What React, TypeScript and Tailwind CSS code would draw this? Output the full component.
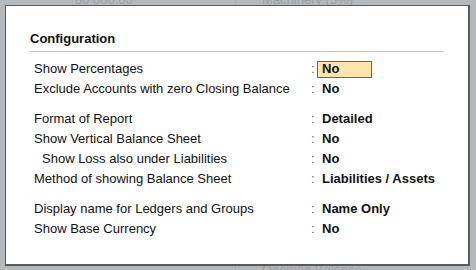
import React from 'react';

type Row = { label: string; value: string; indent?: boolean; active?: boolean };

const groups: Row[][] = [
  [
    { label: 'Show Percentages', value: 'No', active: true },
    { label: 'Exclude Accounts with zero Closing Balance', value: 'No' },
  ],
  [
    { label: 'Format of Report', value: 'Detailed' },
    { label: 'Show Vertical Balance Sheet', value: 'No' },
    { label: 'Show Loss also under Liabilities', value: 'No', indent: true },
    { label: 'Method of showing Balance Sheet', value: 'Liabilities / Assets' },
  ],
  [
    { label: 'Display name for Ledgers and Groups', value: 'Name Only' },
    { label: 'Show Base Currency', value: 'No' },
  ],
];

export default function App() {
  return (
    <div
      className="relative w-[476px] h-[270px] overflow-hidden bg-[#b5b9bc] text-[13px]"
      style={{ fontFamily: '"Liberation Sans", Arial, sans-serif' }}
    >
      {/* report behind the dialog */}
      <div className="flex h-full">
        <div className="w-[236px] border-r border-[#a9adb0] text-[#9ca1a5]">
          <div className="mt-[-8px] pl-[75px] leading-[15px]">80 000.00</div>
        </div>
        <div className="flex flex-1 flex-col justify-between text-[#9ca1a5]">
          <div className="mt-[-8px] pl-[26px] leading-[15px]">Machinery (5%)</div>
          <div className="mb-[-7px] pl-[26px] leading-[15px]">Opening Balance</div>
        </div>
      </div>

      {/* configuration dialog */}
      <div className="absolute left-[5px] top-[5px] w-[465px] h-[261px] bg-white border-l border-t border-r-2 border-b-2 border-[#5a5a5a] pl-[24px] pr-[24px] pt-[23px] text-[#111]">
        <div className="border-b border-[#c9c9c9] pb-[2px] leading-[20px] font-bold">Configuration</div>
        <div className="mt-[7px] flex flex-col gap-[10px] pl-[4px]">
          {groups.map((group, gi) => (
            <div key={gi} className="flex flex-col">
              {group.map(row => (
                <div key={row.label} className="flex h-[20px] items-center">
                  <div className={`w-[277px] shrink-0 ${row.indent ? 'pl-[8px]' : ''}`}>{row.label}</div>
                  <div className="w-[6px] shrink-0 text-[#555]">:</div>
                  <div
                    className={`flex h-[17px] items-center px-[4px] font-bold border ${
                      row.active ? 'w-[55px] bg-[#fee5ae] border-[#1c7ac0]' : 'border-transparent'
                    }`}
                  >
                    {row.value}
                  </div>
                </div>
              ))}
            </div>
          ))}
        </div>
      </div>
    </div>
  );
}
